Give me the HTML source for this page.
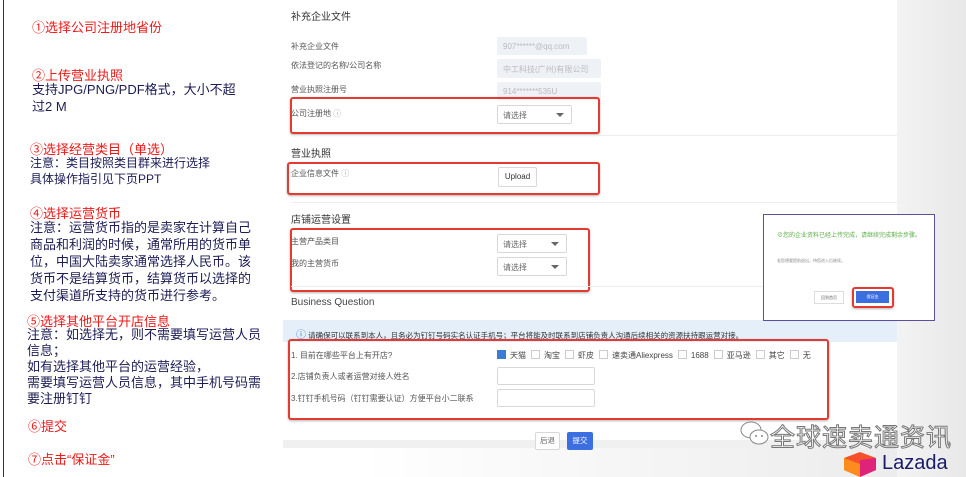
<!DOCTYPE html>
<html><head><meta charset="utf-8"><style>
body{margin:0;width:966px;height:477px;position:relative;overflow:hidden;background:#fff;font-family:"Liberation Sans","Noto Sans CJK SC",sans-serif}
.a{position:absolute;white-space:nowrap}
.r{color:#f01818}.n{color:#1c1c55}
.lb{position:absolute;font-size:8px;color:#555;white-space:nowrap}
.in{position:absolute;background:#eef1f6;border-radius:2px;font-size:8px;color:#bbb;padding:5px 6px;box-sizing:border-box;white-space:nowrap}
.box{position:absolute;border:1px solid #d8d8d8;background:#fff;border-radius:2px;font-size:8px;color:#666;box-sizing:border-box;white-space:nowrap}
.sel{position:absolute;border:1px solid #d8d8d8;background:#fff;border-radius:2px;font-size:8px;color:#666;box-sizing:border-box;padding:4px 5px}
.sel:after{content:"";position:absolute;right:7px;top:7px;border:4px solid transparent;border-top:4px solid #666}
.rb{position:absolute;border:2px solid #e53a32;border-radius:3px;box-shadow:0 1px 2px rgba(0,0,0,.3)}
.h{position:absolute;font-size:10px;color:#333}
.cb{display:inline-block;width:7px;height:7px;border:1px solid #ccc;vertical-align:-1px;margin:0 4px 0 5px}
</style></head><body>
<div style="position:absolute;left:3px;top:0;width:1px;height:477px;background:#333"></div>
<div style="position:absolute;left:897px;top:0;width:69px;height:477px;background:linear-gradient(90deg,#f3f3f3,#e8e8e8)"></div>
<div style="position:absolute;left:360px;top:448px;width:537px;height:29px;background:linear-gradient(90deg,#fff,#ececec)"></div>
<div style="position:absolute;left:283px;top:0;width:614px;height:448px;background:#fff"></div>
<div style="position:absolute;left:283px;top:440px;width:614px;height:8px;background:#f0f0f0"></div>

<div class="a r" style="left:32px;top:17px;font-size:13px">①选择公司注册地省份</div>
<div class="a r" style="left:32px;top:65px;font-size:13px">②上传营业执照</div>
<div class="a n" style="left:32px;top:81px;font-size:13px;line-height:17px">支持JPG/PNG/PDF格式，大小不超<br>过2 M</div>
<div class="a r" style="left:30px;top:139px;font-size:13px">③选择经营类目（单选）</div>
<div class="a n" style="left:30px;top:155px;font-size:12px;line-height:16px">注意：类目按照类目群来进行选择<br>具体操作指引见下页PPT</div>
<div class="a r" style="left:30px;top:203px;font-size:13px">④选择运营货币</div>
<div class="a n" style="left:30px;top:219px;font-size:13px;line-height:17px">注意：运营货币指的是卖家在计算自己<br>商品和利润的时候，通常所用的货币单<br>位，中国大陆卖家通常选择人民币。该<br>货币不是结算货币，结算货币以选择的<br>支付渠道所支持的货币进行参考。</div>
<div class="a r" style="left:27px;top:311px;font-size:13px">⑤选择其他平台开店信息</div>
<div class="a n" style="left:27px;top:327px;font-size:13px;line-height:16px">注意：如选择无，则不需要填写运营人员<br>信息；<br>如有选择其他平台的运营经验，<br>需要填写运营人员信息，其中手机号码需<br>要注册钉钉</div>
<div class="a r" style="left:28px;top:416px;font-size:13px">⑥提交</div>
<div class="a r" style="left:28px;top:449px;font-size:13px">⑦点击“保证金”</div>

<div class="h" style="left:291px;top:8px">补充企业文件</div>
<div class="lb" style="left:291px;top:41px">补充企业文件</div>
<div class="lb" style="left:291px;top:60px">依法登记的名称/公司名称</div>
<div class="lb" style="left:291px;top:84px">营业执照注册号</div>
<div class="lb" style="left:291px;top:108px">公司注册地 <span style="color:#aaa">ⓘ</span></div>
<div class="in" style="left:497px;top:37px;width:90px;height:18px">907******@qq.com</div>
<div class="in" style="left:497px;top:59px;width:104px;height:19px">中工科技(广州)有限公司</div>
<div class="in" style="left:497px;top:82px;width:104px;height:18px">914*******535U</div>
<div class="sel" style="left:497px;top:105px;width:75px;height:19px">请选择</div>
<div class="rb" style="left:290px;top:97px;width:306px;height:33px"></div>
<div style="position:absolute;left:291px;top:135px;width:606px;height:1px;background:#eee"></div>
<div class="h" style="left:291px;top:145px">营业执照</div>
<div class="lb" style="left:291px;top:168px">企业信息文件 <span style="color:#aaa">ⓘ</span></div>
<div class="box" style="left:498px;top:167px;width:39px;height:20px;color:#333;font-size:8px;text-align:center;line-height:18px">Upload</div>
<div class="rb" style="left:287px;top:162px;width:309px;height:29px"></div>
<div style="position:absolute;left:291px;top:202px;width:606px;height:1px;background:#eee"></div>
<div class="h" style="left:291px;top:211px">店铺运营设置</div>
<div class="lb" style="left:291px;top:236px">主营产品类目</div>
<div class="lb" style="left:291px;top:258px">我的主营货币</div>
<div class="sel" style="left:497px;top:234px;width:70px;height:19px">请选择</div>
<div class="sel" style="left:497px;top:257px;width:70px;height:19px">请选择</div>
<div class="rb" style="left:290px;top:228px;width:296px;height:60px"></div>
<div style="position:absolute;left:291px;top:286px;width:606px;height:1px;background:#eee"></div>
<div class="h" style="left:291px;top:297px;color:#444">Business Question</div>
<div style="position:absolute;left:283px;top:320px;width:614px;height:22px;background:#e4effa"></div>
<div class="lb" style="left:296px;top:326px;color:#333;font-size:7.5px"><span style="color:#3a7bd5;font-size:10px">ⓘ</span> 请确保可以联系到本人，且务必为钉钉号码实名认证手机号；平台将能及时联系到店铺负责人沟通后续相关的资源扶持跟运营对接。</div>
<div class="lb" style="left:291px;top:350px">1. 目前在哪些平台上有开店?</div>
<div class="lb" style="left:291px;top:371px">2.店铺负责人或者运营对接人姓名</div>
<div class="lb" style="left:291px;top:393px">3.钉钉手机号码（钉钉需要认证）方便平台小二联系</div>
<div class="lb" style="left:492px;top:350px;color:#444;font-size:8px"><span class="cb" style="background:#3a7bd5;border-color:#3a7bd5"></span>天猫<span class="cb"></span>淘宝<span class="cb"></span>虾皮<span class="cb"></span>速卖通Aliexpress<span class="cb"></span>1688<span class="cb"></span>亚马逊<span class="cb"></span>其它<span class="cb"></span>无</div>
<div class="box" style="left:497px;top:367px;width:98px;height:18px"></div>
<div class="box" style="left:497px;top:389px;width:98px;height:18px"></div>
<div class="rb" style="left:288px;top:339px;width:537px;height:77px"></div>
<div class="box" style="left:535px;top:432px;width:25px;height:18px;font-size:7.5px;text-align:center;line-height:16px">后退</div>
<div style="position:absolute;left:567px;top:432px;width:26px;height:18px;background:#3b6fe0;border-radius:2px;color:#fff;font-size:7.5px;text-align:center;line-height:18px">提交</div>

<div style="position:absolute;left:763px;top:214px;width:170px;height:105px;border:1px solid #5a4fa0;background:#fff"></div>
<div class="a" style="left:777px;top:230px;font-size:6px;color:#5cad4a">⊘您的企业资料已经上传完成，请继续完成剩余步骤。</div>
<div class="a" style="left:777px;top:258px;font-size:4px;color:#888">若您想要提前退出，待您进入后继续。</div>
<div style="position:absolute;left:814px;top:291px;width:28px;height:11px;border:1px solid #ddd;font-size:4px;color:#666;text-align:center;line-height:11px">回到首页</div>
<div style="position:absolute;left:856px;top:291px;width:33px;height:12px;background:#3b6fe0;font-size:4px;color:#fff;text-align:center;line-height:12px">保证金</div>
<div class="rb" style="left:852px;top:287px;width:38px;height:17px"></div>

<svg style="position:absolute;left:740px;top:420px" width="30" height="28" viewBox="0 0 30 28"><ellipse cx="11" cy="10" rx="10" ry="8" fill="#fff" stroke="#888"/><ellipse cx="19" cy="17" rx="9" ry="7" fill="#fff" stroke="#888"/><circle cx="16" cy="16" r="1" fill="#888"/><circle cx="22" cy="16" r="1" fill="#888"/></svg>
<div class="a" style="left:770px;top:418px;font-size:25px;color:#fff;-webkit-text-stroke:1px #777;letter-spacing:1px">全球速卖通资讯</div>
<svg style="position:absolute;left:842px;top:452px" width="36" height="25" viewBox="0 0 36 25"><path d="M2 6 L18 0 L34 6 L34 18 L18 25 L2 18Z" fill="#f5502a"/><path d="M18 8 L34 6 L34 18 L18 25Z" fill="#e0237a"/><path d="M2 6 L18 12 L18 25 L2 18Z" fill="#fb8c1d"/></svg>
<div class="a" style="left:882px;top:452px;font-size:20px;color:#1a1a6a">Lazada</div>
</body></html>
